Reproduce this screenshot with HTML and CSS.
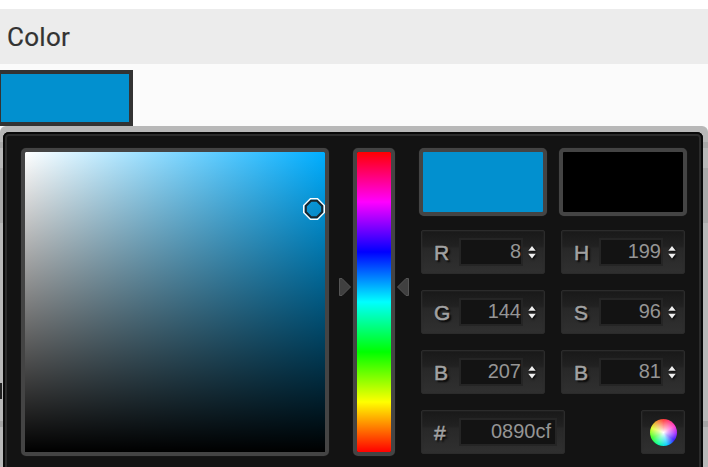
FILE: index.html
```html
<!DOCTYPE html>
<html lang="en">
<head>
<meta charset="utf-8">
<title>Color</title>
<link rel="stylesheet" href="styles.css">
</head>
<body>
<header class="heading"><span class="heading-text">Color</span></header>
<div class="swatch-row"><div class="swatch"></div></div>
<div class="halo">
  <div class="picker">
    <div class="well saturation"><div class="shade"></div>
      <svg class="cursor" viewBox="0 0 22 22"><path d="M7.500 .8h7L21.200 7.500v7L14.500 21.200h-7L.8 14.500v-7z" fill="none" stroke="#fff" stroke-width="1.600"/><path d="M8 2.800h6l5.200 5.200v6L14 19.200H8L2.800 14V8z" fill="none" stroke="#1a252b" stroke-width="2"/></svg>
    </div>
    <div class="hue-group">
      <svg class="arrow" viewBox="0 0 12 18"><path d="M.5.5H3L11.500 9 3 17.500H.5z" fill="#404040" stroke="#555"/></svg>
      <div class="well hue"></div>
      <svg class="arrow" viewBox="0 0 12 18"><path d="M11.500.5H9L.5 9 9 17.500h2.500z" fill="#404040" stroke="#555"/></svg>
    </div>
    <div class="controls">
      <div class="well preview current"></div>
      <div class="well preview previous"></div>
      <div class="field"><span class="label">R</span><span class="value">8</span><svg class="stepper" viewBox="0 0 8 14"><path d="M.3 5.800 4 1l3.700 4.800zM.3 8.800h7.400L4 13.500z"/></svg></div>
      <div class="field"><span class="label">H</span><span class="value">199</span><svg class="stepper" viewBox="0 0 8 14"><path d="M.3 5.800 4 1l3.700 4.800zM.3 8.800h7.400L4 13.500z"/></svg></div>
      <div class="field"><span class="label">G</span><span class="value">144</span><svg class="stepper" viewBox="0 0 8 14"><path d="M.3 5.800 4 1l3.700 4.800zM.3 8.800h7.400L4 13.500z"/></svg></div>
      <div class="field"><span class="label">S</span><span class="value">96</span><svg class="stepper" viewBox="0 0 8 14"><path d="M.3 5.800 4 1l3.700 4.800zM.3 8.800h7.400L4 13.500z"/></svg></div>
      <div class="field"><span class="label">B</span><span class="value">207</span><svg class="stepper" viewBox="0 0 8 14"><path d="M.3 5.800 4 1l3.700 4.800zM.3 8.800h7.400L4 13.500z"/></svg></div>
      <div class="field"><span class="label">B</span><span class="value">81</span><svg class="stepper" viewBox="0 0 8 14"><path d="M.3 5.800 4 1l3.700 4.800zM.3 8.800h7.400L4 13.500z"/></svg></div>
      <div class="last-row">
        <div class="field hex"><span class="label">#</span><span class="value">0890cf</span></div>
        <div class="field submit"><div class="wheel"></div></div>
      </div>
    </div>
  </div>
</div>
</body>
</html>
```
FILE: styles.css
```css
* { box-sizing: border-box; }
html { overflow: hidden; }
body {
  margin: 0;
  height: 467px;
  padding-top: 9px;
  overflow: hidden;
  background: linear-gradient(#fff 9px, #fbfbfb 9px);
  font-family: "Liberation Sans", Arial, sans-serif;
}
.heading {
  height: 55px;
  padding-left: 7px;
  background: #ececec;
  color: #333;
  font: 26px/56px Roboto, sans-serif;
}
.heading-text { letter-spacing: .3px; -webkit-text-stroke: .2px #333; }
.swatch-row { height: 62px; padding-top: 6px; }
.swatch {
  width: 133px;
  height: 56px;
  border: 4px solid #333;
  border-left-width: 1px;
  background: #0290cf;
}
.halo {
  height: 360px;
  padding: 6px 5px 0 3px;
  border-radius: 6px 6px 0 0;
  background:
    linear-gradient(#222, #222) 0 257px / 2px 16px no-repeat,
    linear-gradient(#a5a5a5, #a5a5a5) 0 295px / 100% 6px no-repeat,
    linear-gradient(#b8b8b8 16px, #a9a9a9 16px, #a9a9a9 22px, #b8b8b8 22px, #b8b8b8 42px, #a9a9a9 42px, #a9a9a9 97px, #b8b8b8 97px);
}
.picker {
  display: flex;
  height: 354px;
  padding: 16px 16px 0 18px;
  border-radius: 6px 6px 0 0;
  background: #131313;
  box-shadow: inset 0 0 0 2px #080808, inset 0 0 0 4px #2b2b2b;
}
.well {
  border: 4px solid #444;
  border-radius: 5px;
  box-shadow: 0 0 1px #333;
}
.saturation {
  position: relative;
  width: 308px;
  height: 308px;
  background: linear-gradient(90deg, #fff, #00aeff) padding-box;
}
.shade {
  width: 300px;
  height: 300px;
  background: linear-gradient(transparent, #000);
}
.saturation, .hue, .preview { flex: none; }
.cursor { position: absolute; left: 278px; top: 46px; width: 22px; height: 22px; }
.hue-group {
  display: flex;
  align-items: flex-start;
  gap: 2px;
  width: 70px;
  height: 308px;
  margin-left: 10px;
}
.arrow { flex: none; width: 12px; height: 18px; margin-top: 130px; }
.hue {
  width: 42px;
  height: 308px;
  background: linear-gradient(#f00, #f0f, #00f, #0ff, #0f0, #ff0, #f00) padding-box;
}
.controls {
  display: grid;
  grid-template-columns: 128px 128px;
  grid-template-rows: 68px 44px 44px 44px 44px;
  column-gap: 12px;
  row-gap: 16px;
  align-content: start;
  margin-left: 10px;
}
.preview { width: 128px; height: 68px; }
.current { background: #0290cf; }
.previous { background: #000; }
.controls > .field { margin: -2px 2px 2px; }
.field {
  display: flex;
  align-items: center;
  width: 124px;
  height: 44px;
  border: 1px solid #2b2b2b;
  border-radius: 2px;
  background: linear-gradient(#191919 0, #212121 36%, #282828 42%, #303030 100%);
  box-shadow: inset 0 0 2px #303030;
}
.label {
  width: 39px;
  padding: 2px 0 0 12px;
  color: #a2a2a2;
  font-size: 21px;
  line-height: 24px;
  -webkit-text-stroke: .5px #a2a2a2;
  text-shadow: 2px 2px 2px #000;
}
.value {
  width: 60px;
  height: 24px;
  background: #131313;
  box-shadow: 0 0 0 2px #252525;
  color: #959595;
  font-size: 20px;
  line-height: 22px;
  text-align: right;
}
.stepper {
  width: 8px;
  height: 14px;
  margin-left: 7px;
  fill: #eee;
  filter: drop-shadow(1px 1px 1px #000);
}
.last-row {
  grid-row: 5;
  grid-column: 1 / -1;
  display: flex;
  justify-content: space-between;
  margin: -2px 2px 2px;
}
.hex { width: 144px; }
.hex .value { width: 94px; padding-right: 4px; }
.submit { width: 44px; justify-content: center; }
.wheel {
  width: 27px;
  height: 27px;
  border-radius: 50%;
  filter: blur(.5px);
  background:
    radial-gradient(circle, #fff 0, rgba(255,255,255,.6) 25%, transparent 72%),
    conic-gradient(#f33, #f3c 60deg, #92f 95deg, #31f 125deg, #0cf 165deg, #0f9 205deg, #3f2 245deg, #df2 290deg, #f33);
}
```
